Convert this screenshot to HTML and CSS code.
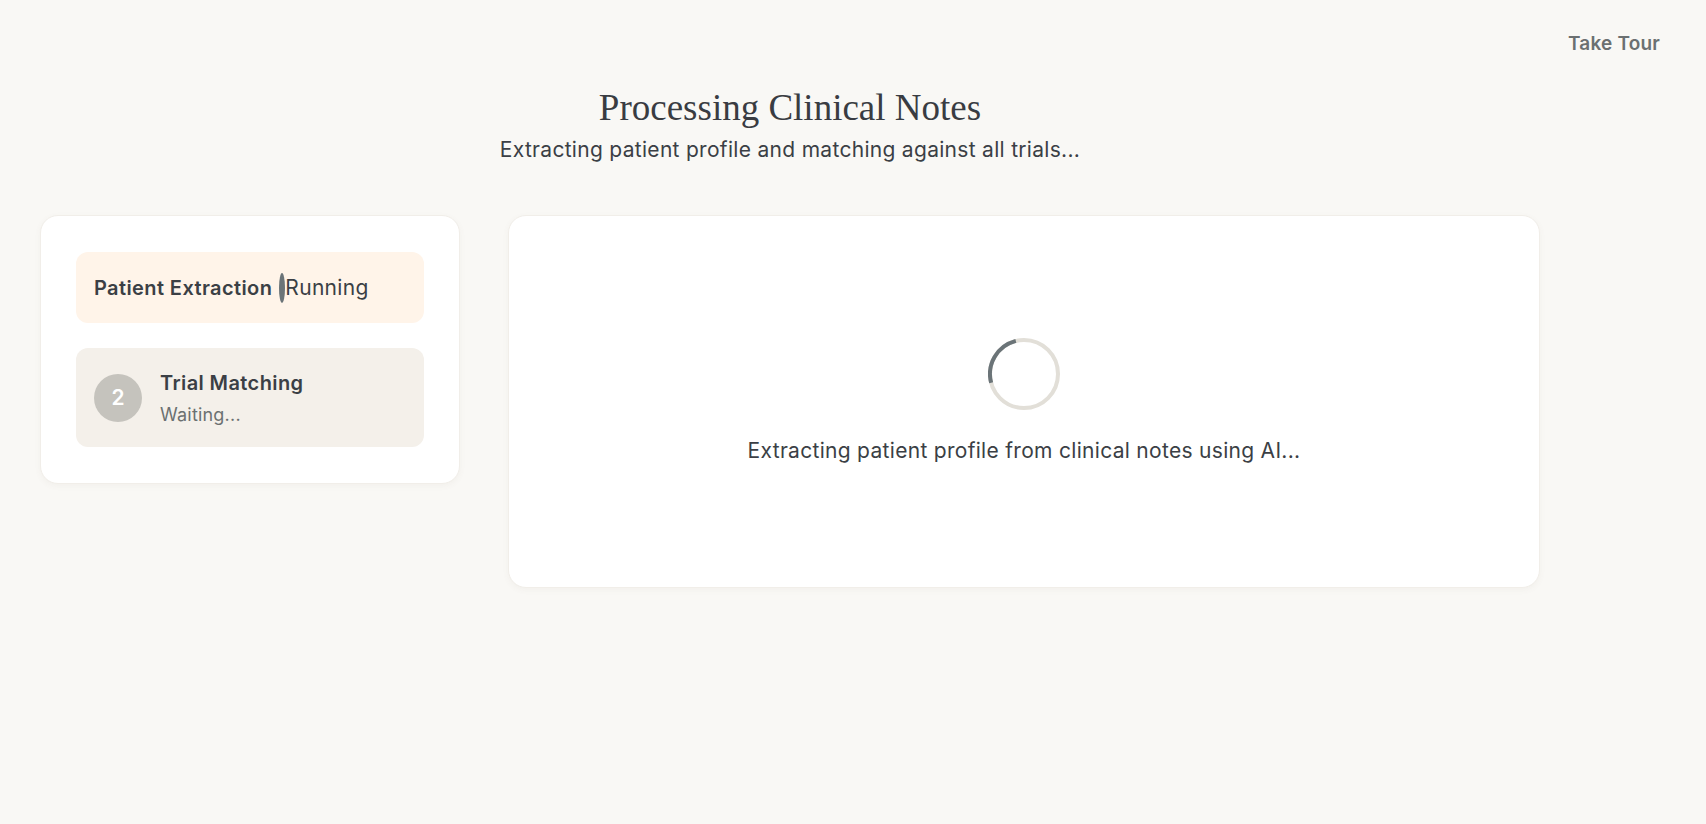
FILE: index.html
```html
<!DOCTYPE html>
<html lang="en">
<head>
<meta charset="utf-8">
<title>Processing Clinical Notes</title>
<link rel="stylesheet" href="styles.css">
</head>
<body>
<div class="topbar">
  <button class="tour">Take Tour</button>
</div>
<main class="page">
  <header class="head">
    <h1 class="title">Processing Clinical Notes</h1>
    <p class="subtitle">Extracting patient profile and matching against all trials...</p>
  </header>
  <section class="layout">
    <aside class="steps card">
      <div class="step step-active">
        <span class="step-name">Patient Extraction</span>
        <span class="pulse"></span>
        <span class="step-running">Running</span>
      </div>
      <div class="step step-waiting">
        <span class="num">2</span>
        <div class="step-text">
          <div class="step-name">Trial Matching</div>
          <div class="step-status">Waiting...</div>
        </div>
      </div>
    </aside>
    <div class="panel card">
      <svg class="spinner" width="72" height="72" viewBox="0 0 72 72">
        <circle cx="36" cy="36" r="34" fill="none" stroke="#e2dfd8" stroke-width="4"/>
        <circle cx="36" cy="36" r="34" fill="none" stroke="#6b7478" stroke-width="4" stroke-dasharray="54 300" transform="rotate(165 36 36)"/>
      </svg>
      <p class="panel-text">Extracting patient profile from clinical notes using AI...</p>
    </div>
  </section>
</main>
</body>
</html>
```

FILE: styles.css
```css
* { box-sizing: border-box; }
html, body { margin: 0; padding: 0; }
body {
  background: #f9f8f5;
  font-family: Inter, "Noto Sans", sans-serif;
  color: #3b3f45;
  min-height: 824px;
}
.topbar {
  display: flex;
  justify-content: flex-end;
  padding: 26px 46px 0 0;
  height: 62px;
}
.tour {
  background: none;
  border: none;
  padding: 0;
  font-family: Inter, "Noto Sans", sans-serif;
  font-weight: 600;
  font-size: 19px;
  letter-spacing: 0.2px;
  color: #6b7071;
  cursor: pointer;
  line-height: 24px;
}
.page {
  width: 1500px;
  margin-left: 40px;
}
.head {
  text-align: center;
}
.title {
  margin: 24px 0 0;
  font-family: "Liberation Serif", "DejaVu Serif", serif;
  font-weight: 400;
  font-size: 37px;
  line-height: 44px;
  color: #393c42;
}
.subtitle {
  margin: 6px 0 0;
  font-size: 21px;
  letter-spacing: 0.3px;
  line-height: 28px;
  color: #3b3f45;
}
.layout {
  display: flex;
  align-items: flex-start;
  gap: 48px;
  margin-top: 51px;
}
.card {
  background: #fff;
  border: 1px solid #f1eee9;
  border-radius: 18px;
  box-shadow: 0 2px 6px rgba(120, 100, 70, 0.05);
}
.steps {
  width: 420px;
  padding: 36px 35px;
  display: flex;
  flex-direction: column;
  gap: 25px;
}
.step {
  border-radius: 12px;
  display: flex;
  align-items: center;
}
.step-active {
  background: #fff4e9;
  height: 71px;
  padding: 0 18px;
}
.step-name {
  font-weight: 600;
  font-size: 20px;
  letter-spacing: 0.4px;
  color: #3b3f45;
}
.pulse {
  width: 6px;
  height: 30px;
  border-radius: 50%;
  background: #6b7478;
  margin-left: 7px;
}
.step-running {
  font-size: 21px;
  letter-spacing: 0.3px;
  color: #3b3f45;
}
.step-waiting {
  background: #f4f0ea;
  padding: 18px;
  height: 99px;
  gap: 18px;
}
.num {
  width: 48px;
  height: 48px;
  border-radius: 50%;
  background: #c5c3bd;
  color: #fff;
  font-weight: 600;
  font-size: 21px;
  display: flex;
  align-items: center;
  justify-content: center;
  flex: none;
}
.step-text {
  display: flex;
  flex-direction: column;
  gap: 9px;
}
.step-status {
  font-size: 18px;
  letter-spacing: 0.2px;
  color: #6b7071;
}
.panel {
  width: 1032px;
  height: 373px;
  display: flex;
  flex-direction: column;
  align-items: center;
  justify-content: center;
}
.spinner {
  display: block;
}
.panel-text {
  margin: 27px 0 0;
  font-size: 21px;
  letter-spacing: 0.3px;
  line-height: 28px;
  color: #3b3f45;
}
```
